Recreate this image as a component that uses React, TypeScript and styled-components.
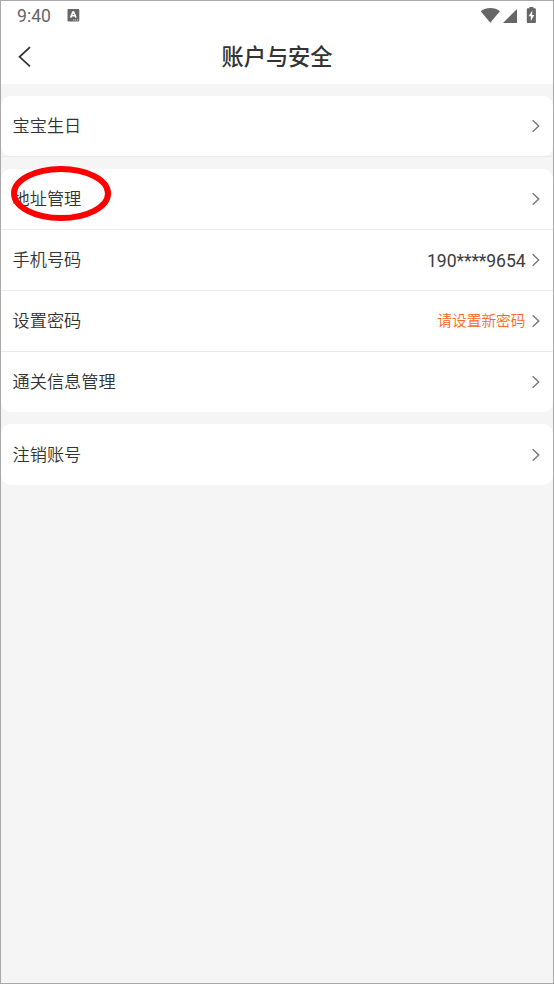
import React from "react";
import styled, { createGlobalStyle } from "styled-components";

const GlobalStyle = createGlobalStyle`
  * { box-sizing: border-box; }
  body { margin: 0; background: #f5f5f5; }
`;

const Screen = styled.main`
  width: 554px;
  height: 984px;
  border: 1px solid #a9a9a9;
  background: #f5f5f5;
  color: #333;
  font-family: Roboto, "Noto Sans CJK SC", sans-serif;
  overflow: hidden;
`;

const StatusBar = styled.div`
  height: 29px;
  padding: 0 16px;
  display: flex;
  align-items: center;
  justify-content: space-between;
  background: #fff;
  color: #666;
`;

const StatusGroup = styled.div`
  display: flex;
  align-items: center;
`;

const Clock = styled.span`
  width: 50px;
  padding-top: 1px;
  font-size: 17.6px;
  line-height: 28px;
`;

const Header = styled.header`
  height: 54px;
  padding: 0 16px;
  display: grid;
  grid-template-columns: 40px 1fr 40px;
  align-items: center;
  background: #fff;
`;

const BackButton = styled.button`
  width: 16px;
  height: 24px;
  padding: 0;
  border: 0;
  background: none;
  display: flex;
  align-items: center;
`;

const Title = styled.h1`
  margin: 0;
  text-align: center;
  font-size: 22.2px;
  line-height: 32px;
  font-weight: 500;
`;

const List = styled.div`
  padding-top: 12px;
  display: flex;
  flex-direction: column;
  gap: 12px;
`;

const Card = styled.section`
  background: #fff;
  border-radius: 10px;
`;

const RuledGroup = styled.div`
  border-bottom: 1px solid #ebebeb;
`;

const Row = styled.div<{ $height: number }>`
  position: relative;
  height: ${(p) => p.$height}px;
  padding: 0 13px 0 11.5px;
  display: flex;
  align-items: center;
  & + & { border-top: 1px solid #ebebeb; }
`;

const Label = styled.span`
  flex: 1;
  font-size: 17.2px;
  line-height: 26px;
  font-weight: 350;
`;

const Value = styled.span<{ $alert?: boolean }>`
  margin-right: 5.5px;
  padding-top: ${(p) => (p.$alert ? 0 : 1)}px;
  font-size: ${(p) => (p.$alert ? 14.7 : 17.6)}px;
  letter-spacing: ${(p) => (p.$alert ? 0 : -0.1)}px;
  line-height: 26px;
  font-weight: ${(p) => (p.$alert ? 350 : 400)};
  color: ${(p) => (p.$alert ? "#ff6622" : "#3c3c3c")};
`;

const Highlight = styled.svg`
  position: absolute;
  left: 10px;
  top: -3px;
`;

const Chevron = () => (
  <svg width="9" height="14" viewBox="0 0 9 14" fill="none" stroke="#777" strokeWidth="1.4">
    <path d="M1.7 1.2 7.7 7 1.7 12.8" />
  </svg>
);

interface ItemProps {
  label: string;
  value?: string;
  alert?: boolean;
  height?: number;
  circled?: boolean;
}

const Item = ({ label, value, alert, height = 61, circled }: ItemProps) => (
  <Row $height={height}>
    <Label>{label}</Label>
    {value && <Value $alert={alert}>{value}</Value>}
    <Chevron />
    {circled && (
      <Highlight width="100" height="55" viewBox="0 0 100 55" fill="none">
        <ellipse cx="50" cy="27.5" rx="47" ry="24.5" stroke="#f00" strokeWidth="6" />
      </Highlight>
    )}
  </Row>
);

export default function App() {
  return (
    <>
      <GlobalStyle />
      <Screen>
        <StatusBar>
          <StatusGroup>
            <Clock>9:40</Clock>
            <svg width="13" height="14" viewBox="0 0 13 14">
              <rect x="0.5" y="0" width="11.8" height="12.6" rx="1" fill="#666" />
              <path d="M3.6 8.6 5.9 3h.8L9 8.6M4.7 6.8h3.4" fill="none" stroke="#fff" strokeWidth="1.6" />
              <path d="M6 11h1.2M8 11h1.2M10 11h1.2" stroke="#fff" strokeWidth="0.8" />
            </svg>
          </StatusGroup>
          <StatusGroup>
            <svg width="57" height="18" viewBox="0 0 57 18" fill="#666">
              <path d="M0.7 4.2C6.5 -0.2 14.5 -0.2 19.9 4.2L10.3 15.8Z" />
              <path d="M23 16 37 1.9V16Z" />
              <path fillRule="evenodd" d="M49.4 1.2V0H53.4V1.2H54.9q1 0 1 1V15q0 1-1 1H47.8q-1 0-1-1V2.2q0-1 1-1ZM52.3 3.6 48.6 9.3h2.2v4.8L54.3 8h-2.2Z" />
            </svg>
          </StatusGroup>
        </StatusBar>
        <Header>
          <BackButton aria-label="返回">
            <svg width="16" height="24" viewBox="0 0 16 24" fill="none" stroke="#333" strokeWidth="1.8">
              <path d="M13 2.2 2.6 11.8 13 21.4" />
            </svg>
          </BackButton>
          <Title>账户与安全</Title>
        </Header>
        <List>
          <RuledGroup>
            <Card>
              <Item label="宝宝生日" height={60} />
            </Card>
          </RuledGroup>
          <Card>
            <Item label="地址管理" height={60} circled />
            <Item label="手机号码" value="190****9654" />
            <Item label="设置密码" value="请设置新密码" alert />
            <Item label="通关信息管理" />
          </Card>
          <Card>
            <Item label="注销账号" />
          </Card>
        </List>
      </Screen>
    </>
  );
}
